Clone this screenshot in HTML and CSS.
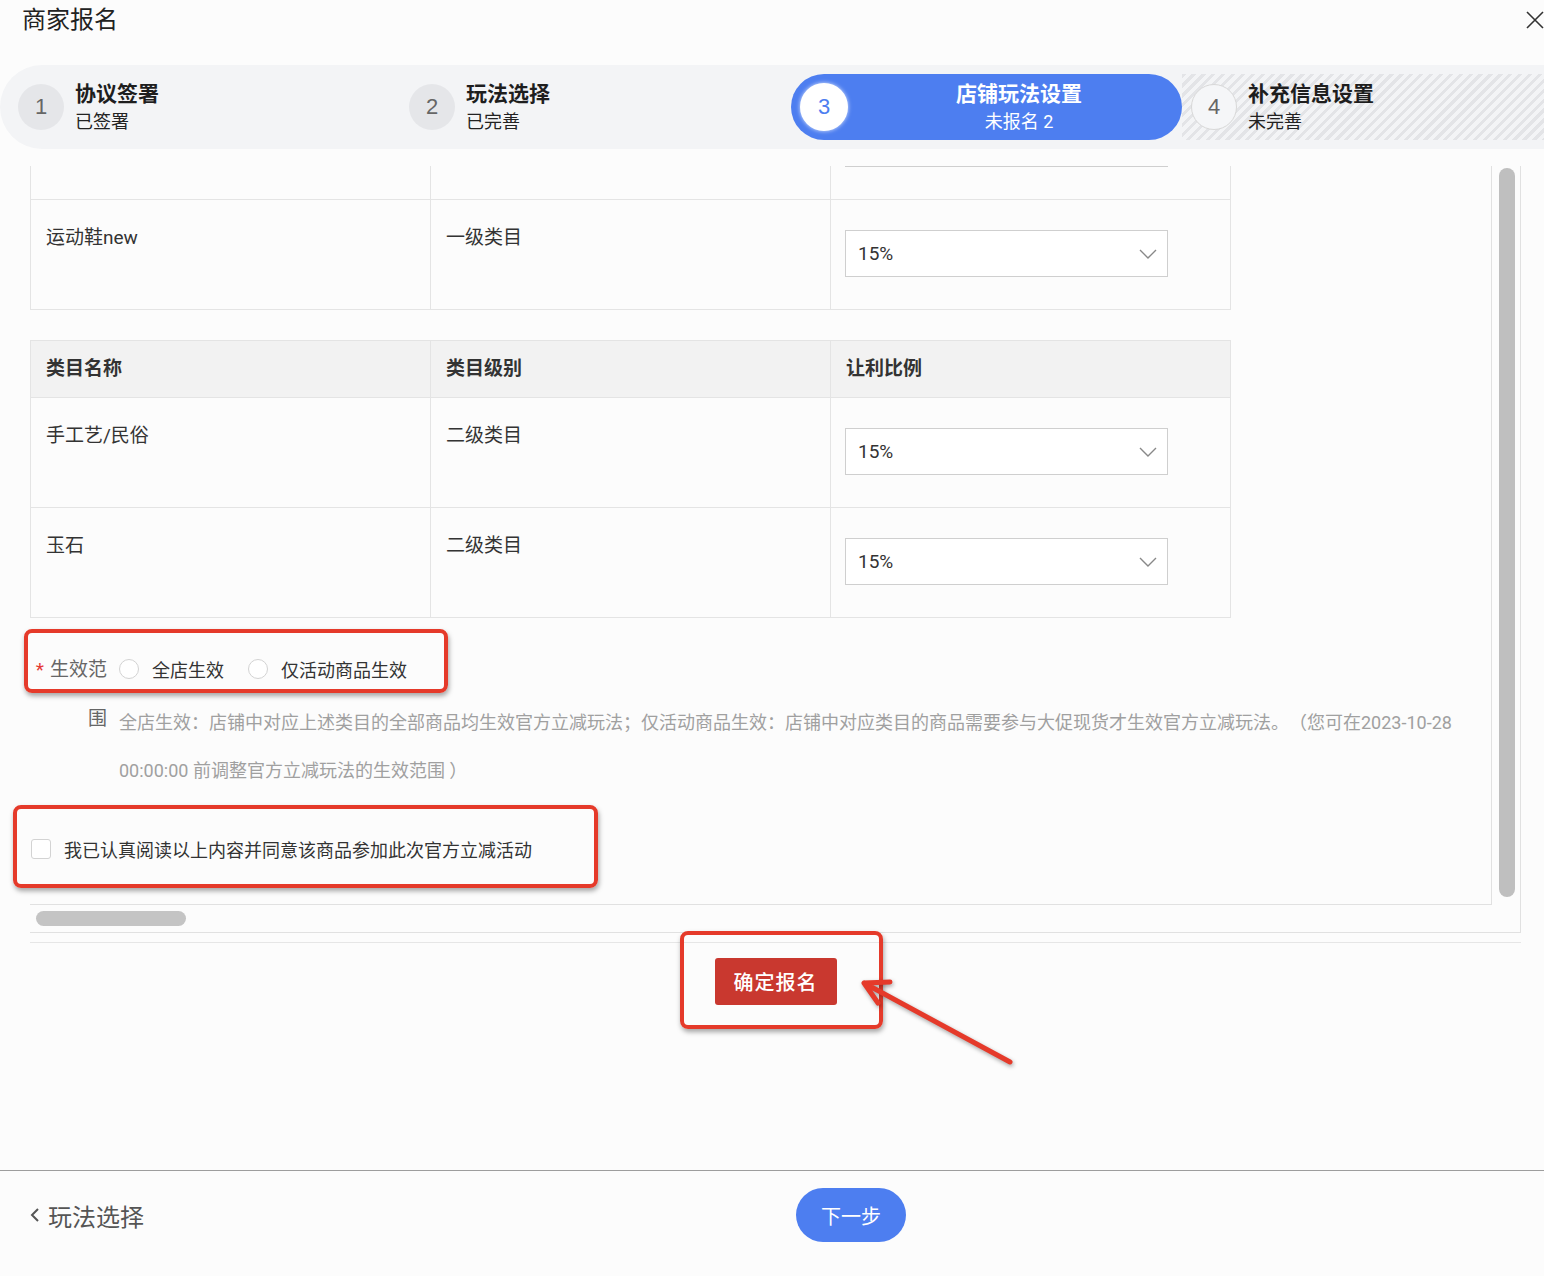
FILE: index.html
```html
<!DOCTYPE html>
<html lang="zh-CN">
<head>
<meta charset="utf-8">
<title>商家报名</title>
<link rel="stylesheet" href="styles.css">
</head>
<body>
<div class="page">
  <header class="top">
    <h1 class="title">商家报名</h1>
    <svg class="close" width="18" height="18" viewBox="0 0 18 18"><path d="M1 1L17 17M17 1L1 17" stroke="#333" stroke-width="1.6" fill="none"/></svg>
  </header>

  <nav class="steps">
    <div class="step"><span class="num">1</span><div class="st"><b>协议签署</b><span>已签署</span></div></div>
    <div class="step"><span class="num">2</span><div class="st"><b>玩法选择</b><span>已完善</span></div></div>
    <div class="step active"><span class="num">3</span><div class="st"><b>店铺玩法设置</b><span>未报名 2</span></div></div>
    <div class="step last"><span class="num">4</span><div class="st"><b>补充信息设置</b><span>未完善</span></div></div>
  </nav>

  <main class="main">
    <section class="panel">
      <div class="viewport">
        <div class="content">
          <div class="tbl tbl-scrolled">
            <div class="cell"></div>
            <div class="cell"></div>
            <div class="cell"><div class="sel"></div></div>
            <div class="cell">运动鞋new</div>
            <div class="cell">一级类目</div>
            <div class="cell"><div class="sel"><span>15%</span><svg width="18" height="10" viewBox="0 0 18 10"><path d="M1 1L9 9L17 1" stroke="#888" stroke-width="1.4" fill="none"/></svg></div></div>
          </div>

          <div class="tbl tbl-second">
            <div class="cell hd">类目名称</div>
            <div class="cell hd">类目级别</div>
            <div class="cell hd">让利比例</div>
            <div class="cell">手工艺/民俗</div>
            <div class="cell">二级类目</div>
            <div class="cell"><div class="sel"><span>15%</span><svg width="18" height="10" viewBox="0 0 18 10"><path d="M1 1L9 9L17 1" stroke="#888" stroke-width="1.4" fill="none"/></svg></div></div>
            <div class="cell">玉石</div>
            <div class="cell">二级类目</div>
            <div class="cell"><div class="sel"><span>15%</span><svg width="18" height="10" viewBox="0 0 18 10"><path d="M1 1L9 9L17 1" stroke="#888" stroke-width="1.4" fill="none"/></svg></div></div>
          </div>

          <div class="form-item">
            <div class="label"><span class="req">*</span>生效范围</div>
            <div class="ctrl">
              <div class="radios">
                <span class="radio"><i></i>全店生效</span>
                <span class="radio"><i></i>仅活动商品生效</span>
              </div>
              <p class="help">全店生效：店铺中对应上述类目的全部商品均生效官方立减玩法；仅活动商品生效：店铺中对应类目的商品需要参与大促现货才生效官方立减玩法。（您可在2023-10-28 00:00:00 前调整官方立减玩法的生效范围 ）</p>
            </div>
          </div>

          <div class="agree"><i class="box"></i>我已认真阅读以上内容并同意该商品参加此次官方立减活动</div>
        </div>
      </div>
      <div class="vbar"><div class="vthumb"></div></div>
      <div class="hbar"><div class="hthumb"></div></div>
      <div class="corner"></div>
    </section>
    <div class="divider"></div>
    <div class="confirm-wrap"><button class="confirm">确定报名</button></div>
  </main>

  <footer class="footer">
    <div class="back"><svg width="10" height="16" viewBox="0 0 10 16"><path d="M8 2L2 8L8 14" stroke="#555" stroke-width="2" fill="none"/></svg><span>玩法选择</span></div>
    <button class="next">下一步</button>
  </footer>

  <div class="mark m1"></div>
  <div class="mark m2"></div>
  <div class="mark m3"></div>
  <svg class="arrow" width="180" height="110" viewBox="0 0 180 110"><path d="M160 92L14 13M14 13L40 12M14 13L28 33" stroke="#e53a2a" stroke-width="5" stroke-linecap="round" stroke-linejoin="round" fill="none"/></svg>
</div>
</body>
</html>
```

FILE: styles.css
```css
* { box-sizing: border-box; }
html, body { margin: 0; padding: 0; }
body {
  background: #fcfcfc;
  font-family: Roboto, "Noto Sans CJK SC", sans-serif;
  color: #333;
  width: 1544px;
  height: 1276px;
  overflow: hidden;
  text-spacing-trim: space-all;
}
.page {
  position: relative;
  height: 1276px;
  display: flex;
  flex-direction: column;
}
.top {
  height: 40px;
  display: flex;
  align-items: center;
  justify-content: space-between;
  padding-left: 22px;
}
.title {
  margin: 0;
  font-size: 24px;
  font-weight: 400;
  line-height: 40px;
  color: #222;
}
.close { flex: none; }

/* steps */
.steps {
  margin-top: 25px;
  height: 84px;
  padding: 9px 0 9px 9px;
  background: #f3f4f6;
  border-radius: 42px 0 0 42px;
  display: flex;
  overflow: hidden;
  flex: none;
}
.step {
  width: 391px;
  flex: none;
  height: 66px;
  display: flex;
  align-items: center;
  padding-left: 9px;
}
.step.last {
  flex: 1;
  width: auto;
  background: repeating-linear-gradient(135deg, #e3e4e7 0 3px, #f3f4f6 3px 7px);
}
.num {
  width: 46px;
  height: 46px;
  border-radius: 50%;
  background: #e5e6e9;
  display: flex;
  align-items: center;
  justify-content: center;
  font-size: 22px;
  color: #666;
  flex: none;
  font-family: "Liberation Sans", sans-serif;
}
.step.last .num {
  background: #f5f6f8;
  border: 1px solid #d8d8d8;
}
.st {
  margin-left: 11px;
  display: flex;
  flex-direction: column;
  gap: 2px;
  padding-top: 2px;
}
.st b {
  font-size: 21px;
  line-height: 26px;
  font-weight: 700;
  color: #1e1e1e;
}
.st span {
  font-size: 18px;
  line-height: 26px;
  color: #222;
}
.step.active {
  background: #4d7ef0;
  border-radius: 33px;
}
.step.active .num {
  width: 48px;
  height: 48px;
  background: #fff;
  color: #4d7ef0;
  box-shadow: 0 0 4px rgba(255, 255, 255, 0.8);
}
.step.active .st {
  flex: 1;
  align-items: center;
  margin-left: 8px;
}
.step.active .st b,
.step.active .st span { color: #fff; }

/* main panel */
.main {
  flex: 1;
  display: flex;
  flex-direction: column;
}
.panel {
  margin: 17px 23px 0 30px;
  display: grid;
  grid-template-columns: 1fr 28px;
  grid-template-rows: 739px 27px;
  border-right: 1px solid #e1e1e1;
  border-bottom: 1px solid #e1e1e1;
}
.viewport {
  overflow: hidden;
  border-right: 1px solid #e1e1e1;
  border-bottom: 1px solid #e1e1e1;
}
.content { margin-top: -77px; }

.tbl {
  display: grid;
  grid-template-columns: repeat(3, 400px);
  width: 1201px;
  border-left: 1px solid #e4e4e4;
  border-top: 1px solid #e4e4e4;
}
.tbl-second { margin-top: 30px; }
.cell {
  height: 110px;
  border-right: 1px solid #e4e4e4;
  border-bottom: 1px solid #e4e4e4;
  padding: 25px 15px 0;
  font-size: 19px;
  line-height: 26px;
  color: #333;
}
.cell.hd {
  height: 57px;
  padding-top: 0;
  background: #f2f2f2;
  display: flex;
  align-items: center;
  font-weight: 700;
  color: #333;
}
.sel {
  margin-top: 5px;
  margin-left: -1px;
  width: 323px;
  height: 47px;
  border: 1px solid #cfcfcf;
  background: #fff;
  display: flex;
  align-items: center;
  justify-content: space-between;
  padding: 0 10px 0 12px;
  font-size: 19px;
  color: #333;
}

.form-item {
  display: flex;
  margin-top: 27px;
}
.label {
  width: 77px;
  flex: none;
  text-align: right;
  font-size: 19px;
  line-height: 49px;
  color: #666;
}
.req {
  color: #e53935;
  margin-right: 6px;
}
.ctrl {
  margin-left: 12px;
  flex: 1;
  min-width: 0;
}
.radios {
  height: 48px;
  display: flex;
  align-items: center;
}
.radio {
  display: flex;
  align-items: center;
  margin-right: 24px;
  font-size: 18px;
  color: #333;
}
.radio i {
  width: 20px;
  height: 20px;
  border: 1px solid #d3d3d3;
  border-radius: 50%;
  background: #fff;
  margin-right: 13px;
}
.help {
  margin: 6px 0 0;
  padding-right: 20px;
  font-size: 18px;
  line-height: 48px;
  color: #a0a0a0;
}
.agree {
  margin-top: 40px;
  height: 28px;
  display: flex;
  align-items: center;
  font-size: 18px;
  color: #333;
}
.agree .box {
  width: 20px;
  height: 20px;
  margin-left: 1px;
  margin-right: 13px;
  border: 1px solid #d3d3d3;
  border-radius: 3px;
  background: #fff;
}

.vbar { padding: 2px 4px 8px 7px; }
.vthumb {
  height: 100%;
  width: 16px;
  border-radius: 8px;
  background: #bfbfbf;
}
.hbar { padding: 6px 0 0 6px; }
.hthumb {
  width: 150px;
  height: 15px;
  border-radius: 8px;
  background: #c4c4c4;
}

.divider {
  margin: 9px 23px 0 30px;
  height: 1px;
  background: #e6e6e6;
}
.confirm-wrap {
  margin: 15px 23px 0 30px;
  display: flex;
  justify-content: center;
}
.confirm {
  width: 122px;
  height: 47px;
  border: 0;
  border-radius: 3px;
  background: #c9382f;
  color: #fff;
  font-family: "Noto Sans CJK SC", sans-serif;
  font-size: 20px;
  font-weight: 500;
  letter-spacing: 1px;
}

.footer {
  height: 106px;
  flex: none;
  border-top: 1px solid #9d9d9d;
  display: flex;
  align-items: flex-start;
  padding: 17px 0 0 30px;
}
.back {
  width: 766px;
  height: 54px;
  display: flex;
  align-items: center;
  font-size: 24px;
  color: #555;
}
.back svg { margin-right: 8px; }
.next {
  width: 110px;
  height: 54px;
  border: 0;
  border-radius: 27px;
  background: #4d7ef0;
  color: #fff;
  font-family: "Noto Sans CJK SC", sans-serif;
  font-size: 20px;
}

/* annotations */
.mark {
  position: absolute;
  border: 4px solid #e53a2a;
  border-radius: 8px;
  box-shadow: 1px 3px 5px rgba(0, 0, 0, 0.35);
  pointer-events: none;
}
.m1 { left: 24px; top: 629px; width: 424px; height: 64px; }
.m2 { left: 13px; top: 805px; width: 585px; height: 83px; }
.m3 { left: 680px; top: 931px; width: 203px; height: 98px; }
.arrow {
  position: absolute;
  left: 850px;
  top: 970px;
  filter: drop-shadow(1px 2px 2px rgba(0, 0, 0, 0.35));
}
```
